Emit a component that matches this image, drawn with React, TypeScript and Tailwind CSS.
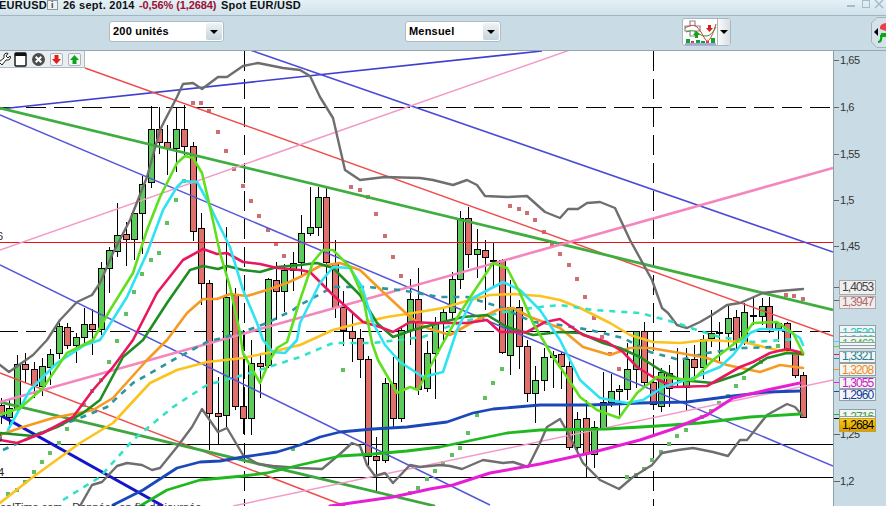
type Candle = [number, number, number, number, number, "g" | "r"];

// x, wick top, wick bottom, body top, body bottom, colour
const candles: Candle[] = [
  [1, 398, 424, 405, 415, "r"], [9, 400, 428, 408, 417, "g"], [17, 355, 412, 364, 409, "g"], [25, 353, 383, 364, 369, "r"],
  [34, 362, 398, 369, 385, "r"], [42, 358, 396, 366, 386, "g"], [50, 349, 385, 354, 367, "g"], [59, 323, 359, 326, 353, "g"],
  [67, 323, 349, 327, 345, "r"], [76, 333, 363, 337, 345, "g"], [84, 308, 345, 324, 337, "g"], [92, 309, 355, 324, 329, "r"],
  [101, 262, 335, 268, 329, "g"], [109, 247, 293, 250, 268, "g"], [117, 203, 257, 235, 251, "g"], [126, 222, 266, 234, 239, "r"],
  [134, 213, 260, 213, 239, "g"], [142, 176, 254, 184, 213, "g"], [151, 106, 188, 129, 182, "g"], [159, 107, 154, 129, 142, "r"],
  [167, 125, 175, 142, 148, "r"], [176, 108, 172, 129, 148, "g"], [184, 105, 155, 129, 146, "r"], [193, 142, 241, 146, 231, "r"],
  [201, 213, 305, 228, 283, "r"], [209, 280, 450, 283, 413, "r"], [218, 377, 445, 413, 416, "r"], [226, 227, 427, 297, 415, "g"],
  [235, 288, 410, 295, 406, "r"], [243, 330, 434, 406, 418, "r"], [251, 340, 435, 363, 418, "g"], [260, 353, 398, 363, 366, "r"],
  [268, 278, 368, 279, 365, "g"], [276, 262, 320, 280, 291, "r"], [284, 264, 312, 270, 291, "g"], [293, 252, 291, 263, 270, "g"],
  [301, 215, 275, 233, 262, "g"], [310, 187, 236, 227, 233, "g"], [318, 187, 236, 197, 227, "g"], [326, 187, 290, 197, 262, "r"],
  [335, 240, 318, 263, 307, "r"], [343, 291, 346, 307, 330, "r"], [352, 312, 362, 331, 338, "r"], [360, 329, 378, 338, 359, "r"],
  [368, 356, 465, 359, 456, "r"], [376, 437, 492, 456, 460, "r"], [385, 378, 463, 383, 460, "g"], [393, 357, 427, 383, 418, "r"],
  [401, 327, 422, 330, 418, "g"], [410, 279, 345, 299, 330, "g"], [418, 268, 395, 299, 389, "r"], [427, 341, 392, 353, 388, "g"],
  [435, 317, 399, 322, 353, "g"], [443, 307, 343, 312, 322, "g"], [452, 272, 320, 279, 312, "g"], [460, 211, 289, 218, 279, "g"],
  [468, 207, 268, 218, 254, "r"], [477, 229, 278, 249, 254, "g"], [485, 240, 310, 250, 257, "r"], [493, 243, 287, 260, 261, "r"],
  [502, 259, 354, 260, 352, "r"], [510, 280, 375, 307, 355, "g"], [519, 300, 369, 307, 346, "r"], [527, 340, 402, 346, 393, "r"],
  [535, 366, 423, 380, 393, "g"], [544, 348, 391, 357, 380, "g"], [553, 351, 388, 355, 357, "g"], [561, 352, 389, 354, 366, "r"],
  [569, 361, 450, 366, 447, "r"], [577, 412, 450, 419, 447, "g"], [586, 400, 477, 418, 453, "r"], [594, 421, 468, 427, 454, "g"],
  [603, 372, 430, 402, 428, "g"], [611, 374, 407, 391, 402, "g"], [619, 385, 418, 389, 391, "g"], [627, 343, 400, 369, 389, "g"],
  [636, 331, 388, 331, 369, "g"], [644, 322, 388, 331, 382, "r"], [653, 380, 410, 382, 404, "r"], [661, 368, 412, 372, 406, "g"],
  [669, 365, 407, 373, 388, "r"], [677, 348, 388, 386, 387, "g"], [686, 348, 411, 359, 387, "g"], [694, 345, 379, 359, 367, "r"],
  [703, 335, 379, 339, 367, "g"], [711, 310, 347, 333, 338, "g"], [719, 322, 361, 332, 333, "g"], [728, 306, 348, 318, 333, "g"],
  [736, 310, 352, 317, 342, "r"], [744, 303, 345, 312, 342, "g"], [753, 298, 325, 315, 316, "g"], [762, 298, 325, 306, 316, "g"],
  [769, 297, 333, 306, 329, "r"], [778, 322, 342, 323, 328, "g"], [787, 322, 352, 323, 350, "r"], [795, 350, 378, 352, 375, "r"],
  [803, 372, 418, 375, 417, "r"],
];

const trend: [number, number, number, number, string, number][] = [
  [0, 109, 542, 51, "#3d3fd0", 1.6],
  [250, 50, 833, 252, "#4a4cd6", 1.5],
  [0, 115, 500, 326, "#5557d8", 1.5],
  [500, 326, 833, 466, "#5557d8", 1.5],
  [0, 265, 490, 505, "#5557d8", 1.5],
  [0, 415, 163, 506, "#1414cc", 3],
  [85, 68, 833, 336, "#ee4c4c", 1.5],
  [0, 373, 345, 506, "#ee4c4c", 1.5],
  [0, 108, 833, 310, "#3fae3f", 2.8],
  [0, 402, 435, 506, "#3fa63f", 2.8],
  [0, 250, 570, 50, "#f29ac8", 1.5],
  [0, 402, 833, 168, "#f585bd", 2.6],
  [233, 506, 833, 380, "#f29ac8", 1.5],
];

const upperBand = "0,365 9,372 33,355 47,340 60,320 77,302 92,295 100,283 113,253 130,220 147,177 160,130 165,120 177,97 183,84 193,83 202,89 218,77 227,77 243,66 258,63 283,68 300,70 310,76 320,97 333,118 345,170 360,180 385,177 420,178 433,180 453,185 467,180 477,185 485,196 507,197 527,196 545,212 560,218 568,209 578,209 587,203 600,202 615,208 630,240 652,280 662,308 668,313 677,325 687,328 700,322 712,315 727,305 740,303 763,293 780,291 803,289";
const lowerBand = "80,506 92,485 102,482 117,466 127,463 142,465 152,470 160,468 177,447 192,427 202,409 218,432 227,428 243,455 258,464 273,466 300,468 322,469 340,454 352,443 360,446 367,465 375,476 385,473 393,483 410,465 420,467 440,465 450,466 462,469 483,460 503,463 513,462 528,467 540,443 547,427 560,419 568,433 583,463 600,480 619,489 633,477 652,465 662,453 678,450 693,448 713,452 728,456 740,440 747,440 767,415 787,404 795,407 802,415";
const lime = "0,415 20,408 43,388 67,353 93,340 110,310 133,273 147,230 160,197 177,163 185,156 193,158 202,173 210,207 220,253 230,287 240,333 243,353 260,383 270,360 277,348 287,342 300,300 313,262 323,250 333,250 350,267 363,297 372,343 378,360 397,393 410,387 418,390 430,367 443,343 460,313 473,293 493,263 507,268 520,293 533,323 553,357 567,377 580,397 597,410 619,418 637,393 657,377 693,380 713,360 743,337 753,323 777,322 793,333 803,353";
const cyan = "8,430 30,390 57,363 85,345 100,340 127,297 147,253 163,210 177,187 183,181 197,182 207,200 220,227 230,247 243,290 257,323 263,340 273,352 285,353 297,340 300,323 320,283 333,267 350,268 362,287 373,323 385,345 400,362 423,377 443,372 457,330 473,298 503,282 520,290 540,310 560,340 580,380 600,398 627,403 643,400 663,387 693,378 720,367 733,355 750,333 760,329 787,330 800,338 803,345";
const crimson = "0,440 17,443 43,433 73,417 93,390 113,367 133,340 157,293 183,260 203,249 217,254 227,253 243,262 260,264 277,268 300,270 310,272 333,295 363,322 380,327 393,332 410,322 433,323 467,323 487,320 500,332 527,332 545,322 560,319 583,335 607,342 623,352 637,367 653,377 673,387 707,386 740,367 753,362 770,353 787,349 803,353";
const darkGreen = "0,433 33,436 57,427 83,413 100,400 123,357 143,340 167,303 190,270 203,266 218,269 227,266 243,270 260,272 277,267 300,265 317,263 333,268 360,295 377,323 393,337 413,330 443,322 463,317 487,315 507,327 533,335 560,332 580,333 603,343 620,348 640,357 660,370 680,380 713,383 743,373 767,358 787,353 803,354";
const orange = "0,435 20,428 53,418 93,410 113,398 147,360 167,340 187,313 203,299 217,299 230,294 247,296 267,290 287,283 300,277 320,266 340,263 360,270 383,292 410,317 427,328 450,335 473,322 497,310 513,308 530,317 560,328 583,347 610,355 630,348 650,348 680,353 707,358 727,365 760,372 780,365 803,368";
const yellow = "0,503 33,477 80,443 113,423 150,383 177,370 207,362 243,358 267,353 300,345 333,330 360,323 387,317 413,313 443,308 470,300 490,295 513,294 540,296 560,300 580,308 610,323 630,335 653,342 680,343 707,340 743,342 777,350 803,355";
const teal = "3,450 40,433 80,418 107,407 133,383 173,360 207,342 240,333 267,323 293,310 300,305 333,287 367,287 400,290 440,297 467,297 500,307 533,322 560,325 590,330 623,338 650,352 680,360 707,353 743,348 777,347";
const mint = "63,500 100,477 133,440 173,407 207,385 250,373 300,357 333,343 373,343 423,337 447,327 480,317 510,311 540,307 560,305 593,310 640,313 677,323 697,330 720,337 753,342 797,339";
const blue = "113,505 143,490 177,468 200,462 220,461 243,457 277,452 300,445 320,437 340,432 373,429 407,427 447,422 473,413 493,409 540,405 590,405 640,403 687,402 733,396 767,392 800,391";
const midGreen = "140,506 167,490 200,480 243,476 267,473 300,465 340,456 373,454 407,451 440,447 473,440 507,433 540,430 607,429 657,426 700,423 750,417 800,414";
const magenta = "330,506 393,497 430,489 453,485 490,473 540,464 590,453 640,440 673,429 707,415 733,398 767,390 800,383";

const sarRed: [number, number][] = [
  [193, 103], [201, 103], [209, 111], [218, 132], [226, 151], [234, 169], [243, 186], [251, 201], [259, 216], [268, 230], [276, 244], [284, 256],
  [351, 187], [360, 190], [368, 197], [376, 214], [385, 236], [393, 257], [401, 276],
  [510, 206], [519, 209], [527, 213], [535, 220], [544, 232], [552, 244], [560, 254], [569, 265], [577, 279], [585, 297], [594, 318], [602, 337], [610, 354], [619, 369],
  [786, 295], [794, 296], [803, 299],
];
const sarGreen: [number, number][] = [
  [8, 494], [17, 490], [25, 482], [34, 472], [42, 462], [50, 453], [59, 443], [67, 429], [75, 418], [84, 405], [92, 391], [101, 380], [109, 362], [117, 341],
  [126, 314], [134, 292], [142, 274], [151, 260], [159, 253], [167, 223], [176, 200], [184, 181],
  [293, 449], [343, 370], [410, 493], [418, 488], [427, 479], [435, 471], [443, 463], [452, 455], [460, 448], [468, 433], [477, 415], [485, 398], [493, 383], [502, 369],
  [627, 477], [636, 475], [644, 469], [652, 460], [661, 452], [669, 444], [677, 436], [686, 430], [694, 422], [702, 417], [711, 411], [719, 403], [728, 396], [736, 386], [744, 378], [761, 362], [778, 346],
];

function Chart() {
  return (
    <svg className="block w-[833px] h-[455px]" viewBox="0 51 833 455">
      <g stroke="#000" strokeWidth="1" shapeRendering="crispEdges">
        <line x1="0" y1="107.5" x2="833" y2="107.5" strokeDasharray="20 8" strokeDashoffset="2" />
        <line x1="0" y1="331.5" x2="833" y2="331.5" strokeDasharray="20 8" strokeDashoffset="2" />
        <line x1="0" y1="444.5" x2="833" y2="444.5" />
        <line x1="0" y1="477.5" x2="833" y2="477.5" />
        <line x1="244.5" y1="51" x2="244.5" y2="506" strokeDasharray="20 8" />
        <line x1="653.5" y1="51" x2="653.5" y2="506" strokeDasharray="20 8" />
      </g>
      {candles.map(([x, wt, wb, bt, bb, c]) => (
        <g key={x}>
          <line x1={x + 0.5} y1={wt} x2={x + 0.5} y2={wb} stroke="#000" shapeRendering="crispEdges" />
          <rect x={x - 2.5} y={bt + 0.5} width={6} height={bb - bt} fill={c === "g" ? "#5ccb5c" : "#e0706c"} stroke="#000" shapeRendering="crispEdges" />
        </g>
      ))}
      {sarRed.map(([x, y]) => <rect key={`r${x}`} x={x - 2} y={y - 2} width={4} height={4} fill="#cc6f72" />)}
      {sarGreen.map(([x, y]) => <rect key={`g${x}`} x={x - 2} y={y - 2} width={4} height={4} fill="#5fc060" />)}
      <line x1="0" y1="242.5" x2="833" y2="242.5" stroke="#e81414" shapeRendering="crispEdges" />
      {trend.map(([x1, y1, x2, y2, color, w], i) => (
        <line key={i} x1={x1} y1={y1} x2={x2} y2={y2} stroke={color} strokeWidth={w} />
      ))}
      <g fill="none" strokeLinejoin="round" strokeLinecap="round">
        <polyline points={upperBand} stroke="#6e6e6e" strokeWidth="2.4" />
        <polyline points={lowerBand} stroke="#6e6e6e" strokeWidth="2.4" />
        <polyline points={midGreen} stroke="#1fb81f" strokeWidth="2.8" />
        <polyline points={blue} stroke="#1b48b8" strokeWidth="2.8" />
        <polyline points={magenta} stroke="#e61fd6" strokeWidth="3" />
        <polyline points={yellow} stroke="#fcc21e" strokeWidth="2.6" />
        <polyline points={mint} stroke="#2fe3c6" strokeWidth="2.6" strokeDasharray="6 6" strokeLinecap="butt" />
        <polyline points={teal} stroke="#2a96a0" strokeWidth="2.6" strokeDasharray="6 6" strokeLinecap="butt" />
        <polyline points={orange} stroke="#f59a22" strokeWidth="2.6" />
        <polyline points={darkGreen} stroke="#1f8e22" strokeWidth="2.6" />
        <polyline points={crimson} stroke="#e8175f" strokeWidth="2.6" />
        <polyline points={cyan} stroke="#2fe3f2" strokeWidth="2.6" />
        <polyline points={lime} stroke="#5fe01f" strokeWidth="2.6" />
      </g>
    </svg>
  );
}

function ChartTools() {
  return (
    <div className="absolute left-0 top-0 w-[85px] h-[17px] bg-[#e9eef1] border-r border-b border-[#aebbc2] flex items-center">
      <svg className="w-[85px] h-[17px] shrink-0" viewBox="0 1 85 17">
        <path d="M-1 12 L4 8 Q3 4 6 3 L8 3.5 L6 6 L8 8 L10 6 L10.5 8 Q9.5 11 6 10 L2 15 Z" fill="#fff" stroke="#222" strokeWidth="1" />
        <rect x="15" y="3" width="11" height="13" rx="1" fill="#fff" stroke="#111" strokeWidth="1.4" />
        <rect x="15" y="3" width="11" height="3" fill="#111" />
        <circle cx="38.5" cy="9.5" r="6.5" fill="#4d4d4d" />
        <path d="M35.7 6.7 L41.3 12.3 M41.3 6.7 L35.7 12.3" stroke="#fff" strokeWidth="2" />
        <rect x="50.5" y="3.5" width="12" height="12" rx="1.5" fill="#f7f7f7" stroke="#a9b6bd" />
        <path d="M54.5 5 h4 v4 h2.5 l-4.5 5 l-4.5 -5 h2.5 Z" fill="#e41c1c" />
        <rect x="68.5" y="3.5" width="12" height="12" rx="1.5" fill="#f7f7f7" stroke="#a9b6bd" />
        <path d="M72.5 14 h4 v-4 h2.5 l-4.5 -5 l-4.5 5 h2.5 Z" fill="#0ba51c" />
      </svg>
    </div>
  );
}

function Select({ label, width, arrow }: { label: string; width: string; arrow: string }) {
  return (
    <div className={`${width} h-[21px] bg-white rounded-[3px] border border-[#aebcc6] flex items-center justify-between pl-[3px] pr-[1px]`}>
      <span className="text-[11px] font-bold tracking-[0.2px] text-black">{label}</span>
      <span className={`${arrow} h-[17px] rounded-[2px] bg-gradient-to-b from-[#eef3f6] to-[#c5d4dc] flex items-center justify-center`}>
        <span className="w-0 h-0 border-l-[4px] border-r-[4px] border-t-[4px] border-l-transparent border-r-transparent border-t-black" />
      </span>
    </div>
  );
}

function IndicatorButton() {
  return (
    <div className="w-[49px] h-[28px] rounded-[3px] border border-[#a9b6bd] bg-white flex">
      <svg className="w-[34px] h-[26px]" viewBox="0 0 34 26">
        <path d="M7 2 h5 v5 h5 v5 h-5 v5 h-5 v-5 h-5 v-5 h5 Z" fill="#fff" stroke="#8b8b8b" strokeWidth="1.2" />
        <path d="M2 9 Q10 4 14 8 T22 20 T33 5" fill="none" stroke="#de3c3c" />
        <path d="M3 13 Q11 10 15 14 T24 17 T33 8" fill="none" stroke="#2e9a2e" />
        <path d="M25 6 h3 v3 h2 l-3.5 4 l-3.5 -4 h2 Z" fill="#e01b1b" />
        <path d="M12 18 h3 v-3 h2 l-3.5 -4 l-3.5 4 h2 Z" transform="translate(0 1)" fill="#0ba51c" />
        <rect x="3" y="20" width="4" height="4" fill="#0fa52a" />
        <rect x="8" y="22" width="3" height="2" fill="#de3c3c" />
        <rect x="13" y="21" width="4" height="3" fill="#0fa52a" />
        <rect x="18" y="22" width="4" height="2" fill="#0fa52a" />
        <rect x="23" y="22" width="3" height="2" fill="#de3c3c" />
        <rect x="28" y="19" width="4" height="5" fill="#0fa52a" />
        <line x1="2" y1="25" x2="33" y2="25" stroke="#4a4ad0" />
      </svg>
      <div className="flex-1 border-l border-[#a9b6bd] bg-gradient-to-r from-[#fafafa] to-[#d9dfe2] flex items-center justify-center">
        <span className="w-0 h-0 border-l-[4px] border-r-[4px] border-t-[4px] border-l-transparent border-r-transparent border-t-black" />
      </div>
    </div>
  );
}

function CornerButton() {
  return (
    <svg className="absolute right-0 top-[1px] w-[15px] h-[31px]" viewBox="0 0 15 31">
      <path d="M15 0.5 H6 L0.5 6 V25 L6 30.5 H15" fill="#d5e2e9" stroke="#a3b2ba" />
      <path d="M7 11 v8 l-4 -4 Z" fill="#000" />
      <path d="M15 6 Q8 7 9 12 L15 14 Z" fill="#e8414a" />
      <path d="M15 17 h-4 l-1 5 q0 3 -3 3 M9 19 h6" fill="none" stroke="#0ba51c" strokeWidth="2.2" />
    </svg>
  );
}

const ticks: [string, string][] = [
  ["1,65", "top-[3px]"], ["1,6", "top-[50px]"], ["1,55", "top-[97px]"], ["1,5", "top-[143px]"], ["1,45", "top-[189px]"],
];

const markers: string[] = [
  "top-[236px] bg-[#666]", "top-[249px] bg-[#666]",
  "top-[290px] bg-[#2fe3f2]", "top-[295px] bg-[#5fe01f]", "top-[303px] bg-[#e8175f]",
  "top-[307px] bg-[#2a96a0]", "top-[318px] bg-[#f59a22]", "top-[331px] bg-[#e61fd6]",
  "top-[340px] bg-[#1b48b8]", "top-[363px] bg-[#1fb81f]", "top-[367px] bg-[#000]",
  "top-[383px] bg-[#666]", "top-[430px] bg-[#666]",
];

const boxes: [string, string, string][] = [
  ["1,3539", "top-[274px] h-[8px] text-[#22c8c0]", "leading-[15px]"],
  ["1,3493", "top-[281px] h-[5px] text-[#2fd4dd]", "leading-[14px]"],
  ["1,3462", "top-[285px] h-[7px] text-[#40b840]", "leading-[15px]"],
  ["", "top-[291px] h-[4px] text-black", ""],
  ["", "top-[294px] h-[4px] text-black", ""],
  ["1,3321", "top-[300px] h-[12px] text-[#23808c]", "leading-[9px]"],
  ["1,3208", "top-[312px] h-[13px] text-[#f08a10]", "leading-[12px]"],
  ["1,3055", "top-[326px] h-[12px] text-[#d012c8]", "leading-[11px]"],
  ["1,2960", "top-[338px] h-[12px] text-[#123a9c]", "leading-[11px]"],
  ["1,2716", "top-[358px] h-[8px] text-[#3f9f3f]", "leading-[14px]"],
  ["1,2695", "top-[365px] h-[4px] text-[#333]", "leading-[12px]"],
];

function Axis() {
  return (
    <div className="relative w-[53px] h-full bg-[#c9dbe5] border-l border-[#8e9ea7] text-[11px] tracking-[-0.4px] text-[#333]">
      {ticks.map(([t, pos]) => (
        <div key={t} className={`absolute left-0 ${pos} flex items-center`}>
          <span className="w-[5px] h-px bg-[#666] mr-[1px]" />
          <span className="leading-[13px]">{t}</span>
        </div>
      ))}
      {markers.map((cls, i) => (
        <span key={i} className={`absolute left-0 h-px w-[6px] ${cls}`} />
      ))}
      <span className="absolute left-[6px] top-[377px] leading-[13px]">1,25</span>
      <span className="absolute left-[6px] top-[424px] leading-[13px]">1,2</span>
      <div className="absolute left-[5px] top-[229px] w-[37px] h-[15px] bg-[#f0f0f0] border border-[#a8a8a8] pl-[2px] text-[12px] tracking-[-0.9px] leading-[13px] text-[#444]">1,4053</div>
      <div className="absolute left-[5px] top-[245px] w-[37px] h-[13px] bg-[#f2eded] border border-[#b3a8a8] pl-[2px] text-[12px] tracking-[-0.9px] leading-[11px] text-[#b36a6a]">1,3947</div>
      {boxes.map(([t, cls, lh], i) => (
        <div key={i} className={`absolute left-[5px] w-[37px] bg-[#f4f6f6] border border-[#8fa0a8] pl-[2px] text-[12px] tracking-[-0.9px] overflow-hidden ${cls} ${lh}`}>{t}</div>
      ))}
      <div className="absolute left-[5px] top-[367px] w-[37px] h-[14px] bg-gradient-to-b from-[#f8cb12] to-[#d99c05] border border-[#c8a12a] pl-[2px] text-[12px] tracking-[-0.9px] leading-[12px] text-black">1,2684</div>
    </div>
  );
}

export default function App() {
  return (
    <div className="w-[886px] h-[506px] overflow-hidden flex flex-col bg-white font-['Liberation_Sans',Arial,sans-serif]">
      <div className="relative h-[16px] shrink-0 bg-gradient-to-b from-[#e4f1f7] to-[#d0e2eb] border-b border-[#a5b5bd] flex items-center text-[11px] font-bold tracking-[0.25px] text-[#111] overflow-hidden whitespace-nowrap">
        <span className="ml-[-1px] w-[48px] mt-[-5px]">EURUSD</span>
        <span className="w-[11px] h-[10px] mt-[-5px] bg-[#eef2f4] border border-[#8c9aa2] text-[9px] leading-[8px] text-center text-[#444]">i</span>
        <span className="ml-[5px] w-[76px] mt-[-5px]">26 sept. 2014</span>
        <span className="w-[82px] mt-[-5px] tracking-[-0.1px] text-[#9c0f2f]">-0,56% (1,2684)</span>
        <span className="mt-[-5px]">Spot EUR/USD</span>
        <svg className="absolute right-0 top-0 w-[40px] h-[9px]" viewBox="0 0 40 9">
          <rect x="1" y="5" width="8" height="2" fill="#a9bcc6" />
          <rect x="16.5" y="0.5" width="7" height="7" fill="none" stroke="#a9bcc6" />
          <path d="M29 0 L37 8 M37 0 L29 8" stroke="#a9bcc6" strokeWidth="1.6" />
        </svg>
      </div>
      <div className="relative h-[35px] shrink-0 bg-[#c9dbe5] border-b border-[#98a7ae] flex items-center">
        <div className="ml-[109px] mt-[-3px]">
          <Select label="200 unités" width="w-[115px]" arrow="w-[16px]" />
        </div>
        <div className="ml-[181px] mt-[-3px]">
          <Select label="Mensuel" width="w-[96px]" arrow="w-[16px]" />
        </div>
        <div className="ml-[181px] mt-[-2px]">
          <IndicatorButton />
        </div>
        <CornerButton />
      </div>
      <div className="flex flex-1 min-h-0">
        <div className="relative w-[833px] h-[455px] overflow-hidden text-[11px] text-[#222]">
          <Chart />
          <ChartTools />
          <span className="absolute left-[-3px] top-[179px] leading-[13px]">6</span>
          <span className="absolute left-[-4px] top-[381px] leading-[13px]">9</span>
          <span className="absolute left-[-2px] top-[415px] leading-[13px]">4</span>
          <span className="absolute left-[-8px] top-[450px] leading-[13px] text-[#333] whitespace-nowrap">RealTime.com - Données en fin de journée</span>
        </div>
        <Axis />
      </div>
    </div>
  );
}
